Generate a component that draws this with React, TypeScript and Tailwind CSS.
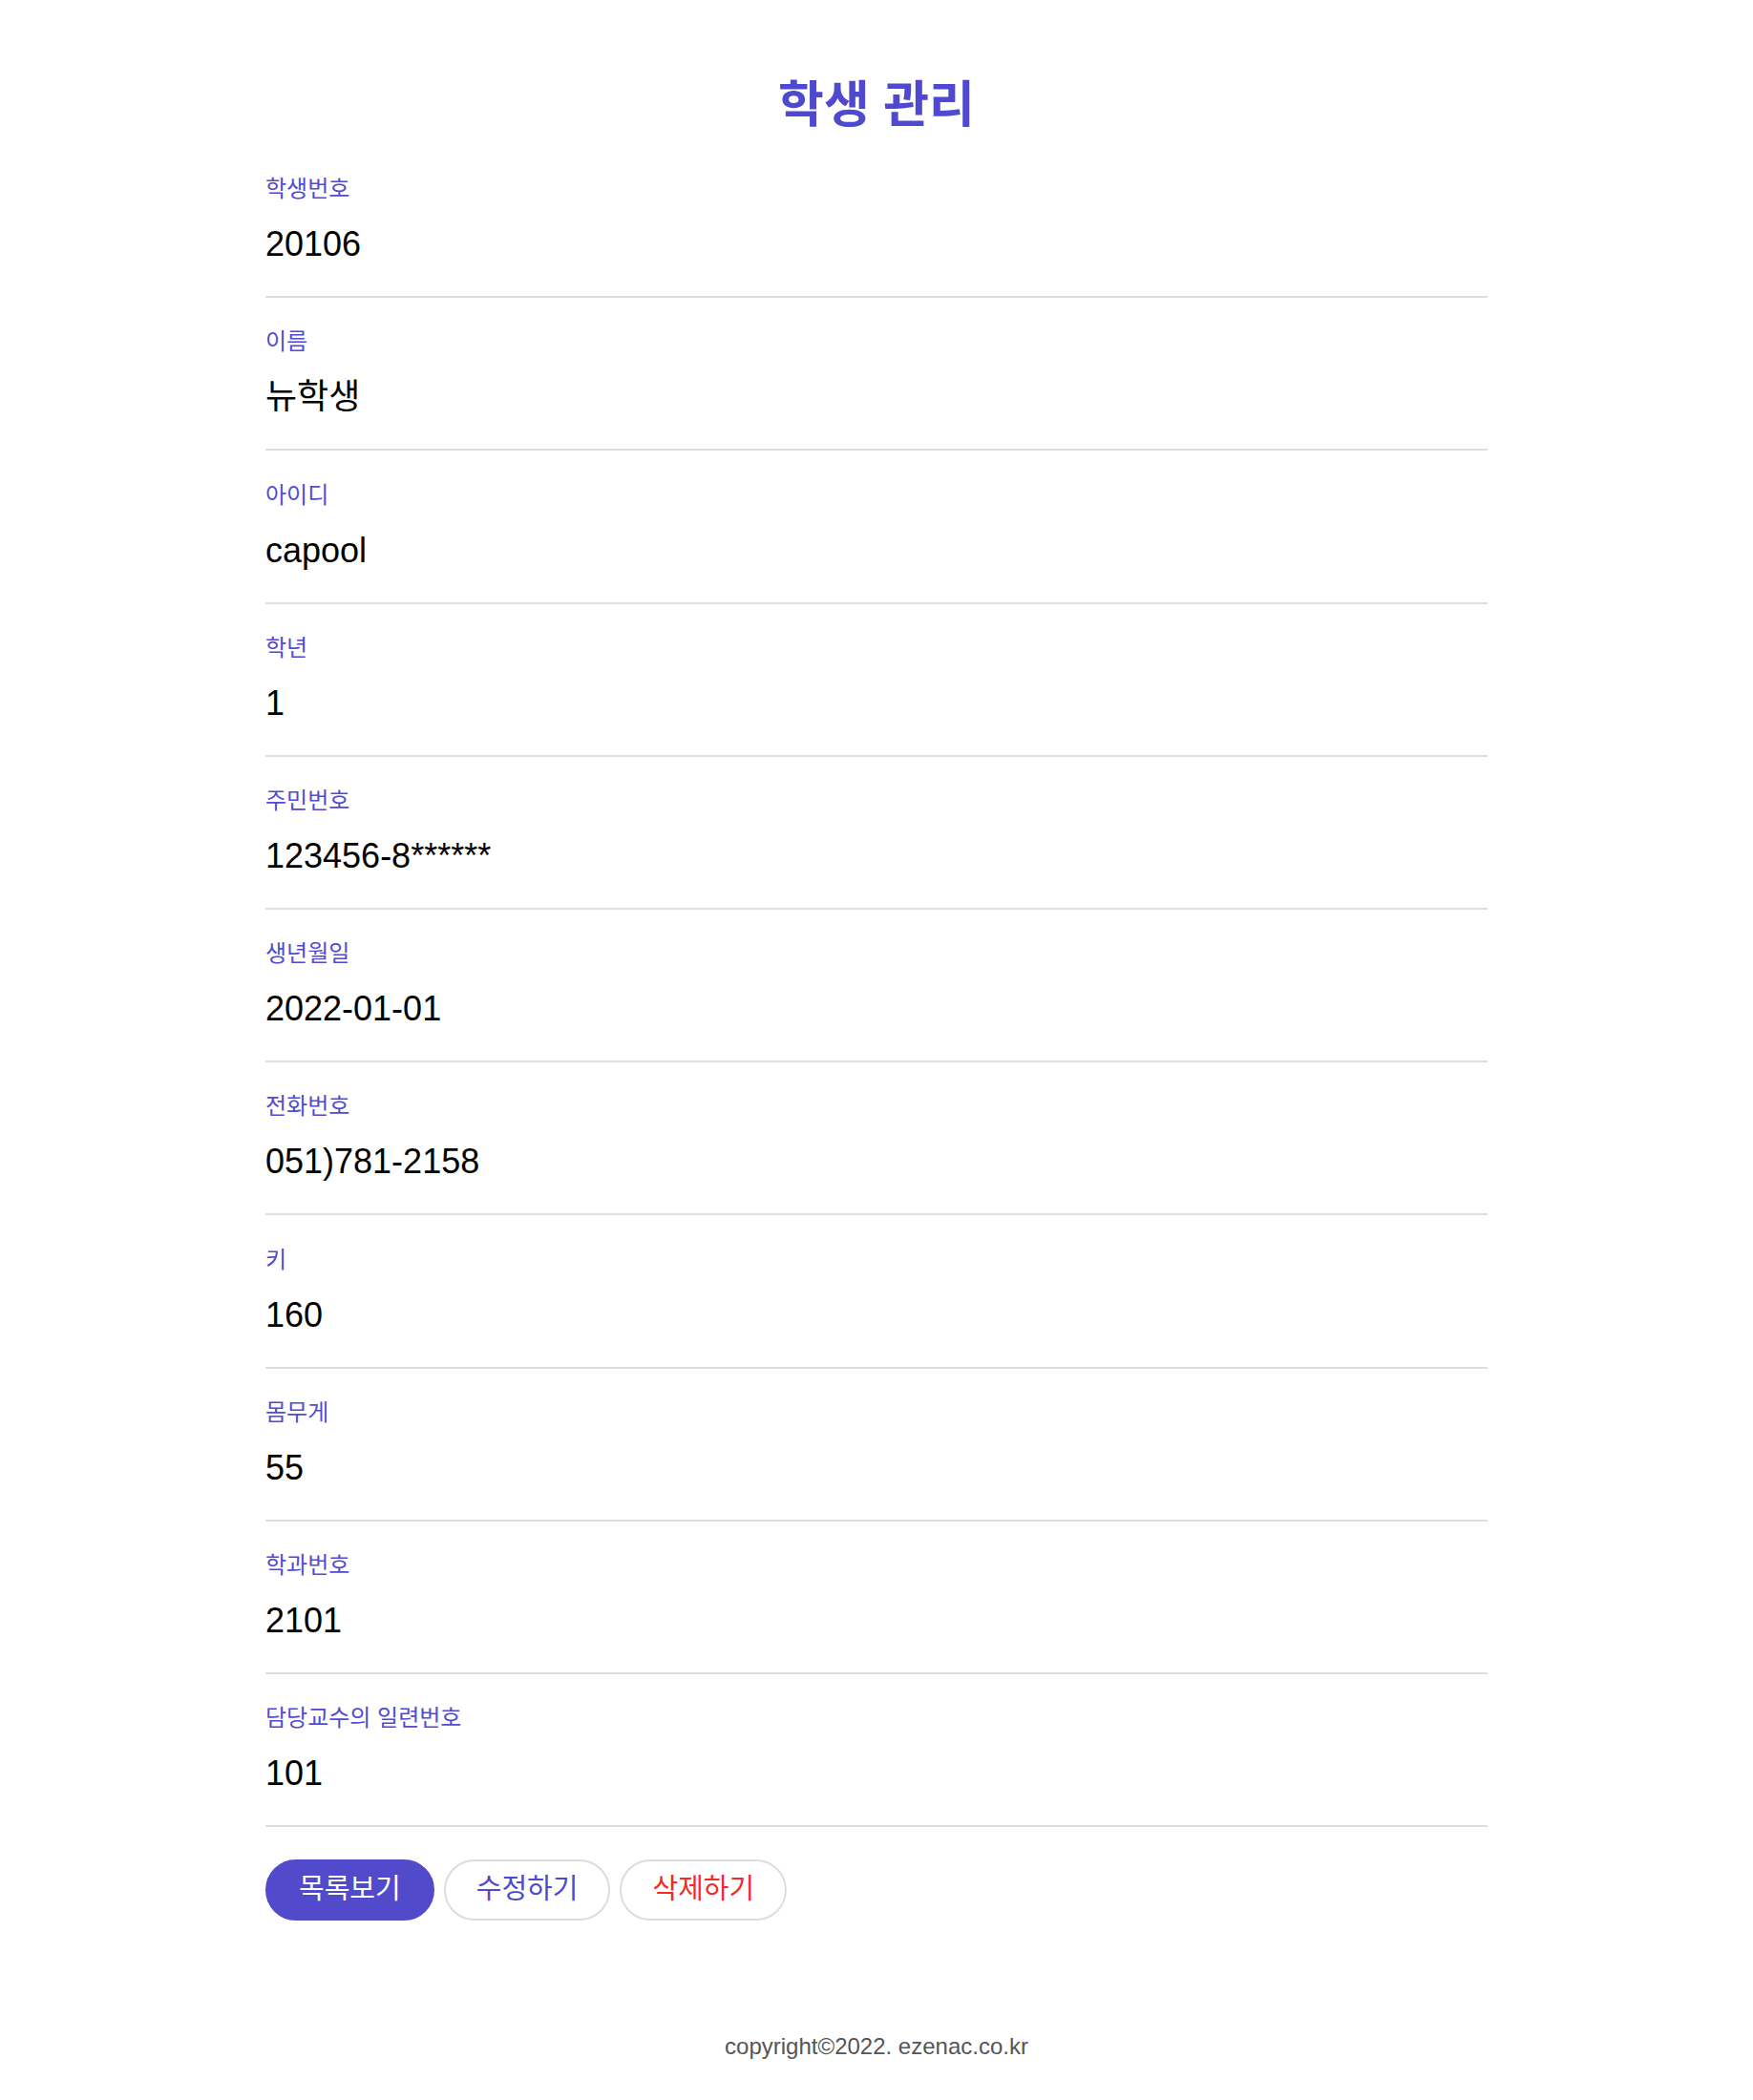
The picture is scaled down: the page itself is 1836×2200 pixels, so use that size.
const fields = [
  { label: "학생번호", value: "20106" },
  { label: "이름", value: "뉴학생" },
  { label: "아이디", value: "capool" },
  { label: "학년", value: "1" },
  { label: "주민번호", value: "123456-8******" },
  { label: "생년월일", value: "2022-01-01" },
  { label: "전화번호", value: "051)781-2158" },
  { label: "키", value: "160" },
  { label: "몸무게", value: "55" },
  { label: "학과번호", value: "2101" },
  { label: "담당교수의 일련번호", value: "101" },
];

export default function App() {
  return (
    <div className="min-h-[2200px] bg-white font-['Liberation_Sans','Noto_Sans_CJK_KR',sans-serif] text-black">
      <div className="w-[1280px] mx-auto">
        <h1 className="pt-[70px] h-[152px] text-center text-[52px] leading-[80px] font-bold text-[#4f49cf]">
          학생 관리
        </h1>

        <dl>
          {fields.map((f) => (
            <div key={f.label} className="pt-[30.2px] pb-[30px] border-b-2 border-[#dddddd]">
              <dt className="text-[24px] leading-[32px] text-[#534bd4]">{f.label}</dt>
              <dd className="mt-[18px] text-[36px] leading-[48px]">{f.value}</dd>
            </div>
          ))}
        </dl>

        <div className="mt-[34px] flex gap-[10px]">
          <button className="h-[64px] px-[33px] rounded-full border-2 border-[#514bcc] bg-[#514bcc] text-white text-[29px]">
            목록보기
          </button>
          <button className="h-[64px] px-[32px] rounded-full border-2 border-[#dddddd] bg-white text-[#4f48d0] text-[29px]">
            수정하기
          </button>
          <button className="h-[64px] px-[32px] rounded-full border-2 border-[#dddddd] bg-white text-[#f22a2a] text-[29px]">
            삭제하기
          </button>
        </div>

        <footer className="mt-[114px] text-center text-[24px] leading-[36px] text-[#555555]">
          copyright©2022. ezenac.co.kr
        </footer>
      </div>
    </div>
  );
}
